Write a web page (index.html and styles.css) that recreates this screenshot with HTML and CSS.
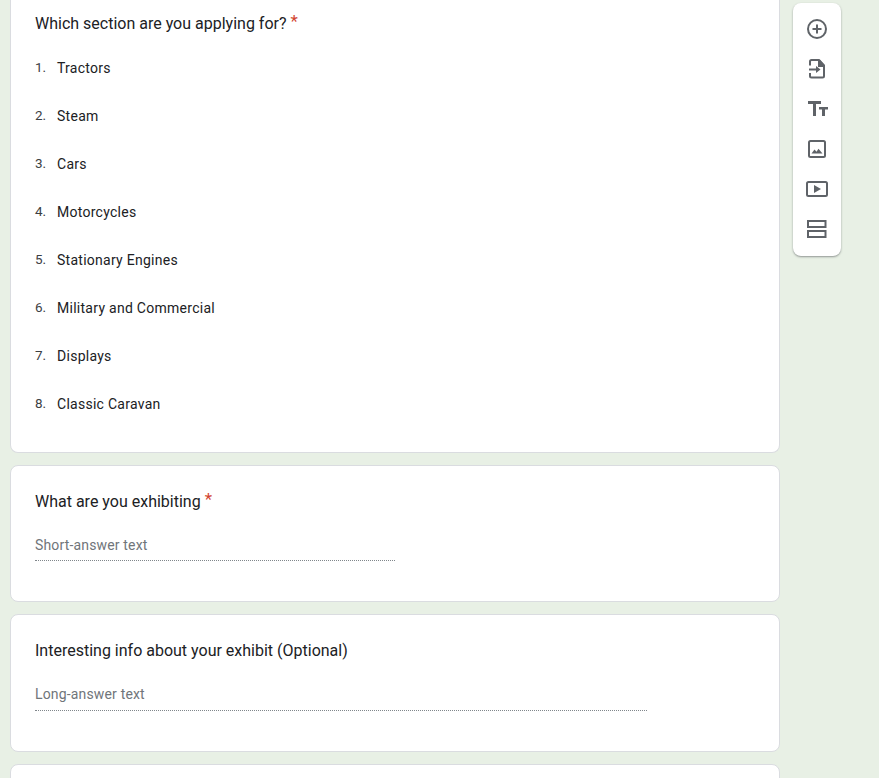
FILE: index.html
```html
<!DOCTYPE html>
<html lang="en">
<head>
<meta charset="utf-8">
<title>Form editor</title>
<link rel="stylesheet" href="styles.css">
</head>
<body>
<div class="page">
  <main class="form">
    <section class="card card-first">
      <h2 class="question">Which section are you applying for? <span class="req">*</span></h2>
      <ol class="options">
        <li><span class="num">1.</span><span>Tractors</span></li>
        <li><span class="num">2.</span><span>Steam</span></li>
        <li><span class="num">3.</span><span>Cars</span></li>
        <li><span class="num">4.</span><span>Motorcycles</span></li>
        <li><span class="num">5.</span><span>Stationary Engines</span></li>
        <li><span class="num">6.</span><span>Military and Commercial</span></li>
        <li><span class="num">7.</span><span>Displays</span></li>
        <li><span class="num">8.</span><span>Classic Caravan</span></li>
      </ol>
    </section>
    <section class="card card-short">
      <h2 class="question">What are you exhibiting <span class="req">*</span></h2>
      <div class="answer answer-short">Short-answer text</div>
    </section>
    <section class="card card-long">
      <h2 class="question">Interesting info about your exhibit (Optional)</h2>
      <div class="answer answer-long">Long-answer text</div>
    </section>
    <section class="card card-last"></section>
  </main>
  <aside class="toolbar">
    <svg class="icon" viewBox="0 0 24 24"><circle cx="12" cy="12" r="9" fill="none" stroke="currentColor" stroke-width="2"/><path d="M12 7.500v9M7.500 12h9" fill="none" stroke="currentColor" stroke-width="2"/></svg>
    <svg class="icon" viewBox="0 0 24 24"><path d="M5 8.500V4.500A1.500 1.500 0 0 1 6.500 3H14l5 5.500v10.500a1.500 1.500 0 0 1-1.500 1.500H6.500A1.500 1.500 0 0 1 5 19v-3" fill="none" stroke="currentColor" stroke-width="2" stroke-linejoin="round"/><path d="M13 3h2l5 5.500v1.500h-7z" fill="currentColor"/><path d="M4 12.500h8" fill="none" stroke="currentColor" stroke-width="2"/><path d="M11 9l4.500 3.500-4.500 3.500z" fill="currentColor"/></svg>
    <svg class="icon" viewBox="0 0 24 24"><path d="M3 4h13v3h-5v12H8V7H3zM14 10h9v2.600h-3V19h-3v-6.400h-3z" fill="currentColor"/></svg>
    <svg class="icon" viewBox="0 0 24 24"><rect x="4" y="4" width="16" height="16" rx="1.500" fill="none" stroke="currentColor" stroke-width="2"/><path d="M6.500 16.500l3-4 2 2.300 2-3 4 4.700z" fill="currentColor"/></svg>
    <svg class="icon" viewBox="0 0 24 24"><rect x="2" y="5" width="20" height="14" rx="1.500" fill="none" stroke="currentColor" stroke-width="2"/><path d="M9 8l7 4-7 4z" fill="currentColor"/></svg>
    <svg class="icon" viewBox="0 0 24 24"><rect x="3" y="4" width="17.500" height="6" fill="none" stroke="currentColor" stroke-width="2"/><rect x="3" y="14" width="17.500" height="6" fill="none" stroke="currentColor" stroke-width="2"/></svg>
  </aside>
</div>
</body>
</html>
```

FILE: styles.css
```css
* { box-sizing: border-box; }
html, body {
  margin: 0;
  height: 100%;
  overflow: hidden;
  background: #e8f0e5;
}
body {
  font-family: Roboto, "Liberation Sans", sans-serif;
  color: #202124;
}
.page {
  display: flex;
  align-items: flex-start;
  gap: 13px;
  padding-left: 10px;
}
.form {
  display: flex;
  flex-direction: column;
  gap: 12px;
  width: 770px;
  height: 778px;
  overflow: hidden;
  flex: none;
}
.card {
  flex: none;
  background: #fff;
  border: 1px solid #dadce0;
  border-bottom-width: 1.5px;
  border-radius: 8px;
  padding: 0 24px;
}
.card-first {
  border-top: 0;
  border-radius: 0 0 8px 8px;
  height: 453px;
  padding-top: 12px;
}
.card-short {
  height: 137px;
  padding-top: 24px;
}
.card-long {
  height: 138px;
  padding-top: 24px;
}
.card-last { height: 60px; }
.question {
  margin: 0;
  font-size: 16px;
  font-weight: 400;
  line-height: 24px;
}
.req {
  color: #d2452f;
  font-size: 17px;
  line-height: 0;
  vertical-align: 2px;
}
.options {
  list-style: none;
  margin: 8px 0 0;
  padding: 0;
  font-size: 14px;
}
.options li {
  display: flex;
  height: 48px;
  align-items: center;
  line-height: 20px;
  letter-spacing: 0.27px;
}
.num {
  width: 22px;
  margin-bottom: 2px;
  font-size: 13.5px;
  letter-spacing: 0;
  color: #3c4043;
}
.answer {
  margin-top: 21px;
  font-size: 14px;
  line-height: 20px;
  color: #70757a;
  border-bottom: 1px dotted #80868b;
  letter-spacing: 0.16px;
}
.answer-short {
  width: 360px;
  height: 26px;
}
.answer-long {
  width: 612px;
  height: 27px;
}
.toolbar {
  flex: none;
  margin-top: 3px;
  width: 48px;
  height: 253px;
  padding: 14px 0;
  display: flex;
  flex-direction: column;
  align-items: center;
  gap: 16px;
  background: #fff;
  border-radius: 8px;
  box-shadow: 0 1px 2px rgba(60, 64, 67, 0.5);
  color: #5f6368;
}
.icon {
  width: 24px;
  height: 24px;
  flex: none;
  display: block;
}
```
